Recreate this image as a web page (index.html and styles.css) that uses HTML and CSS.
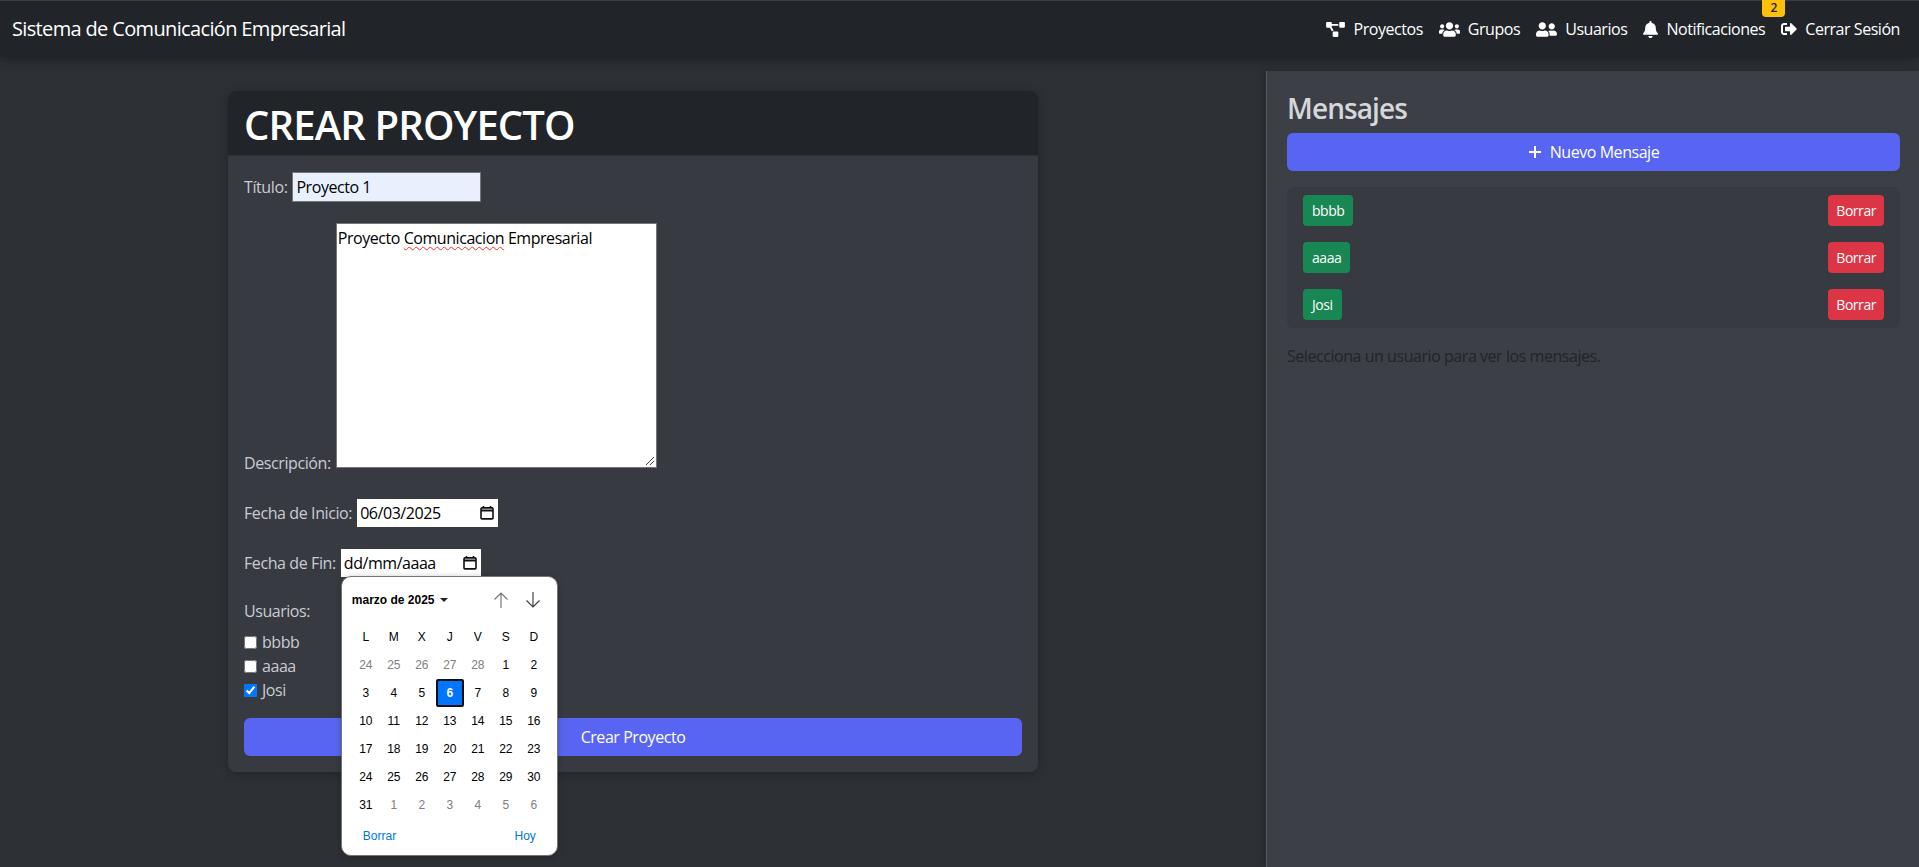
FILE: index.html
```html
<!DOCTYPE html>
<html lang="es">
<head>
    <meta charset="UTF-8">
    <meta name="viewport" content="width=device-width, initial-scale=1.0">
    <title>Sistema de Comunicación Empresarial</title>
    <link rel="stylesheet" href="styles.css">
</head>
<body>

    <nav class="navbar">
        <a class="brand" href="#">Sistema de Comunicación Empresarial</a>
        <div class="nav-links">
            <a class="nav-link" href="#">
                <svg class="icon icon-diagram" viewBox="0 0 640 512"><path d="M384 320H256c-17.67 0-32 14.33-32 32v128c0 17.67 14.33 32 32 32h128c17.67 0 32-14.33 32-32V352c0-17.67-14.33-32-32-32zM192 32c0-17.67-14.33-32-32-32H32C14.33 0 0 14.33 0 32v128c0 17.67 14.33 32 32 32h95.72l73.16 128.04C211.98 300.98 232.4 288 256 288h.28L192 175.51V128h224V64H192V32zM608 0H480c-17.67 0-32 14.33-32 32v128c0 17.67 14.33 32 32 32h128c17.67 0 32-14.33 32-32V32c0-17.67-14.33-32-32-32z"/></svg>
                Proyectos
            </a>
            <a class="nav-link" href="#">
                <svg class="icon icon-wide" viewBox="0 0 640 512"><path d="M96 224c35.3 0 64-28.7 64-64s-28.7-64-64-64-64 28.7-64 64 28.7 64 64 64zm448 0c35.3 0 64-28.7 64-64s-28.7-64-64-64-64 28.7-64 64 28.7 64 64 64zm32 32h-64c-17.6 0-33.5 7.1-45.1 18.6 40.3 22.1 68.9 62 75.1 109.4h66c17.7 0 32-14.3 32-32v-32c0-35.3-28.7-64-64-64zm-256 0c61.9 0 112-50.1 112-112S381.9 32 320 32 208 82.1 208 144s50.1 112 112 112zm76.8 32h-8.3c-20.8 10-43.9 16-68.5 16s-47.6-6-68.5-16h-8.3C179.6 288 128 339.6 128 403.2V432c0 26.5 21.5 48 48 48h288c26.5 0 48-21.5 48-48v-28.8c0-63.6-51.6-115.2-115.2-115.2zm-223.7-13.4C161.5 263.1 145.6 256 128 256H64c-35.3 0-64 28.7-64 64v32c0 17.7 14.3 32 32 32h65.9c6.3-47.4 34.9-87.3 75.2-109.4z"/></svg>
                Grupos
            </a>
            <a class="nav-link" href="#">
                <svg class="icon icon-wide" viewBox="0 0 640 512"><path d="M192 256c61.9 0 112-50.1 112-112S253.9 32 192 32 80 82.1 80 144s50.1 112 112 112zm76.8 32h-8.3c-20.8 10-43.9 16-68.5 16s-47.6-6-68.5-16h-8.3C51.6 288 0 339.6 0 403.2V432c0 26.5 21.5 48 48 48h288c26.5 0 48-21.5 48-48v-28.8c0-63.6-51.6-115.2-115.2-115.2zM480 256c53 0 96-43 96-96s-43-96-96-96-96 43-96 96 43 96 96 96zm48 32h-3.8c-13.9 4.8-28.6 8-44.2 8s-30.3-3.2-44.2-8H432c-20.4 0-39.2 5.9-55.7 15.4 24.4 26.3 39.7 61.2 39.7 99.8v38.4c0 2.2-.5 4.3-.6 6.4H592c26.5 0 48-21.5 48-48 0-61.9-50.1-112-112-112z"/></svg>
                Usuarios
            </a>
            <a class="nav-link nav-notif" href="#">
                <svg class="icon icon-bell" viewBox="0 0 448 512"><path d="M224 512c35.32 0 63.97-28.65 63.97-64H160.03c0 35.35 28.65 64 63.97 64zm215.39-149.71c-19.32-20.76-55.47-51.99-55.47-154.29 0-77.7-54.48-139.9-127.94-155.16V32c0-17.67-14.32-32-31.98-32s-31.98 14.33-31.98 32v20.84C118.56 68.1 64.08 130.3 64.08 208c0 102.3-36.15 133.53-55.47 154.29-6 6.45-8.66 14.16-8.61 21.71.11 16.4 12.98 32 32.1 32h383.8c19.12 0 32-15.6 32.1-32 .05-7.55-2.61-15.27-8.61-21.71z"/></svg>
                Notificaciones
                <span class="notif-badge">2</span>
            </a>
            <a class="nav-link" href="#">
                <svg class="icon icon-signout" viewBox="0 0 512 512"><path d="M497 273L329 441c-15 15-41 4.5-41-17v-96H152c-13.3 0-24-10.7-24-24v-96c0-13.3 10.7-24 24-24h136V88c0-21.4 25.9-32 41-17l168 168c9.3 9.4 9.3 24.6 0 34zM192 436v-40c0-6.6-5.4-12-12-12H96c-17.7 0-32-14.3-32-32V160c0-17.7 14.3-32 32-32h84c6.6 0 12-5.4 12-12V76c0-6.6-5.4-12-12-12H96c-53 0-96 43-96 96v192c0 53 43 96 96 96h84c6.6 0 12-5.4 12-12z"/></svg>
                Cerrar Sesión
            </a>
        </div>
    </nav>

    <div class="layout">
        <main class="content">
            <section class="card">
                <h1 class="card-title">CREAR PROYECTO</h1>
                <form class="card-body">
                    <div class="row row-title">
                        <label for="titulo">Título:</label>
                        <input class="title-input" type="text" id="titulo" value="Proyecto 1">
                    </div>

                    <div class="row row-desc">
                        <label>Descripción:</label>
                        <div class="textarea">
                            Proyecto <span class="misspelt">Comunicacion</span> Empresarial
                            <svg class="resize-grip" viewBox="0 0 12 12"><path d="M11 3 3 11M11 7 7 11" stroke="#444" fill="none"/></svg>
                        </div>
                    </div>

                    <div class="row row-date">
                        <label>Fecha de Inicio:</label>
                        <div class="date-field date-start">
                            <span>06/03/2025</span>
                            <svg class="cal-icon" viewBox="0 0 14 14"><path d="M3.5 0v2M10.5 0v2" stroke="#111" stroke-width="1.6"/><rect x="1" y="1.9" width="12" height="11" rx="1" fill="none" stroke="#111" stroke-width="1.6"/><path d="M1 4.5h12" stroke="#111" stroke-width="2"/></svg>
                        </div>
                    </div>

                    <div class="row row-date">
                        <label>Fecha de Fin:</label>
                        <div class="date-field date-end">
                            <span>dd/mm/aaaa</span>
                            <svg class="cal-icon" viewBox="0 0 14 14"><path d="M3.5 0v2M10.5 0v2" stroke="#111" stroke-width="1.6"/><rect x="1" y="1.9" width="12" height="11" rx="1" fill="none" stroke="#111" stroke-width="1.6"/><path d="M1 4.5h12" stroke="#111" stroke-width="2"/></svg>

                            <div class="picker">
                                <div class="picker-head">
                                    <span class="picker-month">marzo de 2025 <i class="caret"></i></span>
                                    <div class="picker-arrows">
                                        <svg viewBox="0 0 18 18"><path d="M9 17V2M2.5 8.5 9 2l6.5 6.5" fill="none" stroke="#777" stroke-width="1.2"/></svg>
                                        <svg viewBox="0 0 18 18"><path d="M9 1v15M2.5 9.5 9 16l6.5-6.5" fill="none" stroke="#444" stroke-width="1.2"/></svg>
                                    </div>
                                </div>
                                <div class="picker-grid">
                                    <span>L</span><span>M</span><span>X</span><span>J</span><span>V</span><span>S</span><span>D</span>
                                    <span class="off">24</span><span class="off">25</span><span class="off">26</span><span class="off">27</span><span class="off">28</span><span>1</span><span>2</span>
                                    <span>3</span><span>4</span><span>5</span><span class="today">6</span><span>7</span><span>8</span><span>9</span>
                                    <span>10</span><span>11</span><span>12</span><span>13</span><span>14</span><span>15</span><span>16</span>
                                    <span>17</span><span>18</span><span>19</span><span>20</span><span>21</span><span>22</span><span>23</span>
                                    <span>24</span><span>25</span><span>26</span><span>27</span><span>28</span><span>29</span><span>30</span>
                                    <span>31</span><span class="off">1</span><span class="off">2</span><span class="off">3</span><span class="off">4</span><span class="off">5</span><span class="off">6</span>
                                </div>
                                <div class="picker-foot">
                                    <a href="#">Borrar</a>
                                    <a href="#">Hoy</a>
                                </div>
                            </div>
                        </div>
                    </div>

                    <div class="users-label">Usuarios:</div>
                    <label class="check"><input type="checkbox"> bbbb</label>
                    <label class="check"><input type="checkbox"> aaaa</label>
                    <label class="check"><input type="checkbox" checked> Josi</label>

                    <button class="btn-primary btn-create" type="button">Crear Proyecto</button>
                </form>
            </section>
        </main>

        <aside class="sidebar">
            <h3 class="sidebar-title">Mensajes</h3>
            <button class="btn-primary btn-new" type="button">
                <svg class="plus" viewBox="0 0 14 14"><path d="M7 1v12M1 7h12" stroke="#fff" stroke-width="2"/></svg>
                Nuevo Mensaje
            </button>
            <div class="user-list">
                <div class="user-row">
                    <button class="btn-small btn-user" type="button">bbbb</button>
                    <button class="btn-small btn-delete" type="button">Borrar</button>
                </div>
                <div class="user-row">
                    <button class="btn-small btn-user" type="button">aaaa</button>
                    <button class="btn-small btn-delete" type="button">Borrar</button>
                </div>
                <div class="user-row">
                    <button class="btn-small btn-user" type="button">Josi</button>
                    <button class="btn-small btn-delete" type="button">Borrar</button>
                </div>
            </div>
            <p class="hint">Selecciona un usuario para ver los mensajes.</p>
        </aside>
    </div>

</body>
</html>
```

FILE: styles.css
```css
* {
    box-sizing: border-box;
}

body {
    margin: 0;
    height: 100vh;
    overflow: hidden;
    display: flex;
    flex-direction: column;
    font-family: "Open Sans", "Noto Sans", sans-serif;
    font-size: 16px;
    line-height: 24px;
    letter-spacing: -0.45px;
    background-color: #2d3035;
    color: #212529;
}

a {
    text-decoration: none;
}

/* Navbar */
.navbar {
    position: relative;
    z-index: 2;
    height: 57px;
    flex: none;
    display: flex;
    align-items: center;
    justify-content: space-between;
    padding: 0 19px 0 12px;
    background-color: #212529;
    border-top: 1px solid #3a3d42;
    box-shadow: 0 4px 10px rgba(0, 0, 0, 0.3);
}

.brand {
    color: #fff;
    font-size: 20px;
    letter-spacing: -0.65px;
}

.nav-links {
    display: flex;
    align-items: center;
    gap: 16px;
}

.nav-link {
    display: flex;
    align-items: center;
    gap: 8px;
    color: #fff;
}

.nav-notif {
    position: relative;
}

.icon {
    fill: #fff;
}

.icon-diagram {
    width: 19px;
    height: 15px;
}

.icon-wide {
    width: 21px;
    height: 17px;
}

.icon-bell {
    width: 15px;
    height: 17px;
}

.icon-signout {
    width: 16px;
    height: 16px;
}

.notif-badge {
    position: absolute;
    top: -18px;
    right: -20px;
    width: 23px;
    height: 18px;
    border-radius: 0 0 4px 4px;
    background-color: #ffc107;
    color: #212529;
    font-size: 12px;
    font-weight: 600;
    line-height: 17px;
    text-align: center;
}

/* Layout */
.layout {
    flex: 1;
    display: flex;
    min-height: 0;
}

.content {
    flex: 1;
    display: flex;
    justify-content: center;
    align-items: flex-start;
    padding-top: 34px;
}

.sidebar {
    width: 653px;
    flex: none;
    margin-top: 14px;
    padding: 20px 19px 0 20px;
    background-color: #3c3f45;
    border-left: 1px solid #5a5c60;
    box-shadow: -2px 0 6px rgba(0, 0, 0, 0.2);
}

/* Card */
.card {
    width: 810px;
    border-radius: 8px;
    background-color: #383a42;
    box-shadow: 0 2px 8px rgba(0, 0, 0, 0.25);
}

.card-title {
    margin: 0;
    height: 65px;
    padding: 0 16px;
    border-radius: 8px 8px 0 0;
    background-color: #212529;
    border-bottom: 1px solid #2d3035;
    color: #fff;
    font-size: 40px;
    font-weight: 600;
    line-height: 68px;
    letter-spacing: -0.85px;
}

.card-body {
    padding: 16px;
    color: #c9ccd1;
}

.row {
    display: flex;
    align-items: center;
    gap: 5px;
}

.row label {
    letter-spacing: -0.4px;
}

.row-title {
    margin-bottom: 21px;
}

.title-input {
    width: 189px;
    height: 30px;
    padding: 0 3px;
    border: 1px solid #767676;
    background-color: #e8f0fe;
    color: #000;
    font: inherit;
    letter-spacing: inherit;
}

.row-desc {
    align-items: flex-end;
    margin-bottom: 31px;
}

.row-desc label {
    margin-bottom: -7px;
}

.textarea {
    position: relative;
    width: 321px;
    height: 245px;
    padding: 2px 1px;
    border: 1px solid #767676;
    background-color: #fff;
    color: #000;
}

.misspelt {
    text-decoration: underline wavy #e33;
    text-decoration-thickness: 1px;
    text-underline-offset: 2px;
}

.resize-grip {
    position: absolute;
    right: 1px;
    bottom: 1px;
    width: 12px;
    height: 12px;
}

.row-date {
    margin-bottom: 22px;
}

.date-field {
    position: relative;
    height: 28px;
    display: flex;
    align-items: center;
    justify-content: space-between;
    padding: 0 4px 0 3px;
    background-color: #fff;
    color: #000;
}

.date-start {
    width: 141px;
}

.date-end {
    width: 140px;
}

.cal-icon {
    width: 14px;
    height: 14px;
}

/* Date picker popup */
.picker {
    position: absolute;
    z-index: 3;
    top: 27px;
    left: 0;
    width: 217px;
    height: 280px;
    padding: 0 10px;
    border: 1px solid #767676;
    border-radius: 10px;
    background-color: #fff;
    box-shadow: 0 1px 6px rgba(0, 0, 0, 0.25);
    font-family: "Liberation Sans", Arial, sans-serif;
    font-size: 12px;
    letter-spacing: 0;
}

.picker-head {
    height: 46px;
    display: flex;
    align-items: center;
    justify-content: space-between;
    padding-right: 5px;
}

.picker-month {
    font-weight: 700;
    color: #000;
    display: flex;
    align-items: center;
    gap: 5px;
}

.caret {
    border-left: 4px solid transparent;
    border-right: 4px solid transparent;
    border-top: 4px solid #222;
}

.picker-arrows {
    display: flex;
    gap: 14px;
}

.picker-arrows svg {
    width: 18px;
    height: 18px;
}

.picker-grid {
    display: grid;
    grid-template-columns: repeat(7, 28px);
    grid-auto-rows: 28px;
    width: 196px;
}

.picker-grid span {
    display: flex;
    align-items: center;
    justify-content: center;
}

.picker-grid .off {
    color: #808080;
}

.picker-grid .today {
    background-color: #0075ff;
    border: 2px solid #101010;
    border-radius: 2px;
    color: #fff;
    font-weight: 700;
}

.picker-foot {
    display: flex;
    justify-content: space-between;
    align-items: center;
    height: 34px;
    padding: 0 11px 0 11px;
}

.picker-foot a {
    color: #0075d8;
}

/* Users */
.users-label {
    margin-bottom: 7px;
}

.check {
    display: flex;
    align-items: center;
    gap: 5px;
    height: 24px;
}

.check input {
    width: 13px;
    height: 13px;
    margin: 0;
}

/* Buttons */
.btn-primary {
    display: flex;
    align-items: center;
    justify-content: center;
    gap: 8px;
    width: 100%;
    height: 38px;
    border: none;
    border-radius: 6px;
    background-color: #5865f2;
    color: #fff;
    font: inherit;
    letter-spacing: inherit;
}

.btn-create {
    margin-top: 16px;
}

.plus {
    width: 14px;
    height: 14px;
}

.btn-small {
    height: 31px;
    padding: 0 8px;
    border: none;
    border-radius: 4px;
    color: #fff;
    font: inherit;
    font-size: 14px;
    letter-spacing: inherit;
}

.btn-user {
    padding: 0 9px;
    background-color: #198754;
}

.btn-delete {
    background-color: #dc3545;
}

/* Sidebar */
.sidebar-title {
    margin: 0 0 8px;
    color: #d5d7da;
    font-size: 28px;
    font-weight: 600;
    line-height: 34px;
    letter-spacing: -0.9px;
}

.user-list {
    display: flex;
    flex-direction: column;
    gap: 16px;
    margin-top: 16px;
    padding: 8px 16px;
    border-radius: 6px;
    background-color: #383a42;
}

.user-row {
    display: flex;
    justify-content: space-between;
}

.hint {
    margin: 16px 0 0;
}
```
